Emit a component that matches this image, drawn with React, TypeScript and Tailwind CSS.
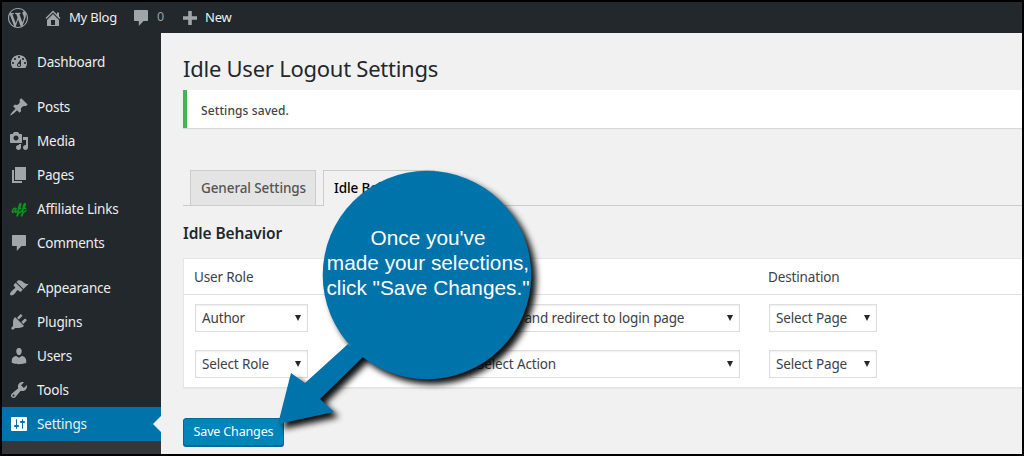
type MenuItem = {
  label: string;
  icon?: string;
  spaced?: boolean;
  active?: boolean;
};

const icons = {
  wordpress:
    "M20 10c0-5.51-4.49-10-10-10C4.48 0 0 4.49 0 10c0 5.52 4.48 10 10 10 5.51 0 10-4.48 10-10zM7.78 15.37L4.37 6.22c.55-.02 1.17-.08 1.17-.08.5-.06.44-1.13-.06-1.11 0 0-1.45.11-2.37.11-.18 0-.37 0-.58-.01C4.12 2.69 6.87 1.11 10 1.11c2.33 0 4.45.87 6.05 2.34-.68-.11-1.65.39-1.65 1.58 0 .74.45 1.36.9 2.1.35.61.55 1.36.55 2.46 0 1.49-1.4 5-1.4 5l-3.03-8.37c.54-.02.82-.17.82-.17.5-.05.44-1.25-.06-1.22 0 0-1.44.12-2.38.12-.87 0-2.33-.12-2.33-.12-.5-.03-.56 1.2-.06 1.22l.92.08 1.26 3.41zM17.41 10c.24-.64.74-1.87.43-4.25.7 1.29 1.05 2.71 1.05 4.25 0 3.29-1.73 6.24-4.4 7.78.97-2.59 1.94-5.2 2.92-7.78zM6.1 18.09C3.12 16.65 1.11 13.53 1.11 10c0-1.3.23-2.48.72-3.59C3.25 10.3 4.67 14.2 6.1 18.09zm4.03-6.63l2.58 6.98c-.86.29-1.76.45-2.71.45-.79 0-1.57-.11-2.29-.33.81-2.38 1.62-4.74 2.42-7.1z",
  home: "M16 8.5l1.53 1.53-1.06 1.06L10 4.6l-6.47 6.49-1.06-1.06L10 2.5l4 4v-2h2v4zm-6-2.46l6 5.99V18H4v-5.97zM12 17v-5H8v5h4z",
  comments: "M4 2h12c.6 0 1 .4 1 1v9c0 .6-.4 1-1 1h-3.500l-4.700 5v-5H4c-.6 0-1-.4-1-1V3c0-.6.4-1 1-1z",
  plus: "M17 8.2v3.600h-5.200V17H8.200v-5.200H3V8.200h5.200V3h3.600v5.200H17z",
  dashboard:
    "M3.76 16h12.48c1.1-1.37 1.76-3.11 1.76-5 0-4.42-3.58-8-8-8s-8 3.58-8 8c0 1.89.66 3.63 1.76 5zM10 4c.55 0 1 .45 1 1s-.45 1-1 1-1-.45-1-1 .45-1 1-1zM6 6c.55 0 1 .45 1 1s-.45 1-1 1-1-.45-1-1 .45-1 1-1zm8 0c.55 0 1 .45 1 1s-.45 1-1 1-1-.45-1-1 .45-1 1-1zm-5.37 5.55L12 7v6c0 1.1-.9 2-2 2s-2-.9-2-2c0-.57.24-1.08.63-1.45zM4 10c.55 0 1 .45 1 1s-.45 1-1 1-1-.45-1-1 .45-1 1-1zm12 0c.55 0 1 .45 1 1s-.45 1-1 1-1-.45-1-1 .45-1 1-1zm-5 3c0-.55-.45-1-1-1s-1 .45-1 1 .45 1 1 1 1-.45 1-1z",
  posts:
    "M10.44 3.02l1.82-1.82 6.36 6.35-1.83 1.82c-1.05-.68-2.48-.57-3.41.36l-.75.75c-.92.93-1.04 2.35-.35 3.41l-1.83 1.82-2.41-2.41-2.8 2.79c-.42.42-3.38 2.71-3.8 2.29s1.86-3.39 2.28-3.81l2.79-2.79L4.1 9.36l1.83-1.82c1.05.69 2.48.57 3.4-.36l.75-.75c.93-.92 1.05-2.35.36-3.41z",
  media:
    "M13 11V4c0-.55-.45-1-1-1h-1.67L9 1H5L3.67 3H2c-.55 0-1 .45-1 1v7c0 .55.45 1 1 1h10c.55 0 1-.45 1-1zM7 4.5c1.38 0 2.5 1.12 2.5 2.5S8.38 9.5 7 9.5 4.5 8.38 4.5 7 5.62 4.5 7 4.5zM14 6h5v10.5c0 1.38-1.12 2.5-2.5 2.5S14 17.88 14 16.5s1.12-2.5 2.5-2.5c.17 0 .34.02.5.05V9h-3V6zm-4 8.05V13h2v3.5c0 1.38-1.12 2.5-2.5 2.5S7 17.88 7 16.5 8.12 14 9.5 14c.17 0 .34.02.5.05z",
  pages: "M6 15V2h11v13H6zm-1 1h8v2H3V5h2v11z",
  appearance:
    "M14.48 11.06L7.41 3.99l1.5-1.5c.5-.56 2.3-.47 3.51.32 1.21.8 1.43 1.28 2.91 2.1 1.18.64 2.45 1.26 4.45.85zm-.71.71L6.7 4.7 4.93 6.47c-.39.39-.39 1.02 0 1.41l1.06 1.06c.39.39.39 1.03 0 1.42-.6.6-1.43 1.11-2.21 1.69-.35.26-.7.53-1.01.84C1.43 14.23.4 16.08 1.4 17.07c.99 1 2.84-.03 4.18-1.36.31-.31.58-.66.85-1.02.57-.78 1.08-1.61 1.69-2.21.39-.39 1.02-.39 1.41 0l1.06 1.06c.39.39 1.02.39 1.41 0z",
  plugins:
    "M13.11 4.36L9.87 7.6 8 5.73l3.24-3.24c.35-.34 1.05-.2 1.56.32.52.51.66 1.21.31 1.55zm-8 1.77l.91-1.12 9.01 9.01-1.19.84c-.71.71-2.63 1.16-3.82 1.16H6.14L4.9 17.26c-.59.59-1.54.59-2.12 0-.59-.58-.59-1.53 0-2.12l1.24-1.24v-3.88c0-1.13.4-3.19 1.09-3.89zm7.26 3.97l3.24-3.24c.34-.35 1.04-.21 1.55.31.52.51.66 1.21.31 1.55l-3.24 3.25z",
  users:
    "M10 9.25c-2.27 0-2.73-3.44-2.73-3.44C7 4.02 7.82 2 9.97 2c2.16 0 2.98 2.02 2.71 3.81 0 0-.41 3.44-2.68 3.44zm0 2.57L12.72 10c2.39 0 4.52 2.33 4.52 4.53v2.49s-3.65 1.13-7.24 1.13c-3.65 0-7.24-1.13-7.24-1.13v-2.49c0-2.25 1.94-4.48 4.47-4.48z",
  tools:
    "M16.68 9.77c-1.34 1.34-3.3 1.67-4.95.99l-5.41 6.52c-.99.99-2.59.99-3.58 0s-.99-2.59 0-3.57l6.52-5.42c-.68-1.65-.35-3.61.99-4.95 1.28-1.28 3.12-1.62 4.72-1.06l-2.89 2.89 2.82 2.82 2.86-2.87c.53 1.58.18 3.39-1.08 4.65zM3.81 16.21c.4.39 1.04.39 1.43 0 .4-.4.4-1.04 0-1.43-.39-.4-1.03-.4-1.43 0-.39.39-.39 1.03 0 1.43z",
  settings:
    "M18 16V4c0-.55-.45-1-1-1H3c-.55 0-1 .45-1 1v12c0 .55.45 1 1 1h14c.55 0 1-.45 1-1zM8 11h1c.55 0 1 .45 1 1s-.45 1-1 1H8v1.5c0 .28-.22.5-.5.5s-.5-.22-.5-.5V13H6c-.55 0-1-.45-1-1s.45-1 1-1h1V5.5c0-.28.22-.5.5-.5s.5.22.5.5V11zm5-2h-1c-.55 0-1-.45-1-1s.45-1 1-1h1V5.5c0-.28.22-.5.5-.5s.5.22.5.5V7h1c.55 0 1 .45 1 1s-.45 1-1 1h-1v5.5c0 .28-.22.5-.5.5s-.5-.22-.5-.5V9z",
};

const menu: MenuItem[] = [
  { label: "Dashboard", icon: icons.dashboard },
  { label: "Posts", icon: icons.posts, spaced: true },
  { label: "Media", icon: icons.media },
  { label: "Pages", icon: icons.pages },
  { label: "Affiliate Links" },
  { label: "Comments", icon: icons.comments },
  { label: "Appearance", icon: icons.appearance, spaced: true },
  { label: "Plugins", icon: icons.plugins },
  { label: "Users", icon: icons.users },
  { label: "Tools", icon: icons.tools },
  { label: "Settings", icon: icons.settings, active: true },
];

function Icon({ d, className = "text-[#a0a5aa]" }: { d: string; className?: string }) {
  return (
    <svg viewBox="0 0 20 20" className={`h-5 w-5 shrink-0 fill-current ${className}`}>
      <path d={d} />
    </svg>
  );
}

// Handwritten loops of the affiliate plugin's mark
function AffIcon() {
  return (
    <svg
      viewBox="0 0 20 20"
      className="h-5 w-5 shrink-0 fill-none stroke-[#12901a]"
      strokeWidth="1.5"
      strokeLinecap="round"
      strokeLinejoin="round"
    >
      <path d="M7 9.500C5 8.800 3.200 10.800 3.300 12.800C3.700 14.800 6 12.500 7 9.800C6.300 12.500 6.500 14.500 8 13C10 10.800 12.300 6.500 11.800 4.800C10.800 3.500 9.500 7.500 9.300 11.500C9.200 14.500 8.800 17.300 8 16.800C7.500 15.500 10 13.800 12 12.500C14.300 10.500 16.800 6.500 16.300 4.800C15.300 3.500 14 7.500 13.800 11.500C13.700 14.500 13.200 17.300 12.400 16.800C12 15.500 14.500 13.500 17 11.500M9.300 9.500h2.500M13.800 9.500h3" />
    </svg>
  );
}

function AdminBar() {
  return (
    <header className="flex h-[31px] shrink-0 items-center bg-[#23282d] pl-1.5 text-[13px] text-[#eee]">
      <Icon d={icons.wordpress} />
      <Icon d={icons.home} className="ml-[15px] text-[#a0a5aa]" />
      <span className="ml-1.5 w-[62px] tracking-[-0.2px] whitespace-nowrap">My Blog</span>
      <Icon d={icons.comments} className="text-[#a0a5aa]" />
      <span className="ml-[6px] w-[23px] text-[12.5px] text-[#9ca2a7]">0</span>
      <Icon d={icons.plus} />
      <span className="ml-[5px] tracking-[-0.2px]">New</span>
    </header>
  );
}

function Sidebar() {
  return (
    <aside className="flex w-[159px] shrink-0 flex-col bg-[#23282d] pt-3">
      {menu.map((item) => (
        <a
          key={item.label}
          className={`flex h-[34px] shrink-0 items-center pl-[7px] text-[13.5px] tracking-[-0.2px] text-[#eee] ${
            item.spaced ? "mt-[11px]" : ""
          } ${item.active ? "relative bg-[#0073aa]" : ""}`}
        >
          {item.icon ? (
            <Icon d={item.icon} className={item.active ? "text-white" : "text-[#a0a5aa]"} />
          ) : (
            <AffIcon />
          )}
          <span className="ml-2 pt-px whitespace-nowrap">{item.label}</span>
          {item.active && (
            <svg viewBox="0 0 8 16" className="absolute top-[9px] right-0 h-4 w-2 fill-[#f1f1f1]">
              <path d="M8 0v16L0 8z" />
            </svg>
          )}
        </a>
      ))}
      <div className="flex-1 bg-[#32373c]" />
    </aside>
  );
}

function Select({ value, className }: { value: string; className: string }) {
  return (
    <div
      className={`flex h-7 items-center justify-between border border-[#ddd] bg-white pr-1.5 pl-1.5 shadow-[inset_0_1px_2px_rgba(0,0,0,0.07)] ${className}`}
    >
      <span className="pt-px whitespace-nowrap">{value}</span>
      <svg viewBox="0 0 6 6" className="h-1.5 w-1.5 fill-[#23282d]">
        <path d="M0 0h6L3 6z" />
      </svg>
    </div>
  );
}

function BehaviorTable() {
  return (
    <section className="mt-[13px] h-[130px] border border-r-0 border-[#e5e5e5] bg-white text-[13.5px] tracking-[-0.15px] text-[#3c4146] shadow-[0_1px_1px_rgba(0,0,0,0.04)]">
      <div className="flex h-9 items-center border-b border-[#e1e1e1] pt-0.5 pl-2.5">
        <span className="w-[574px]">User Role</span>
        <span>Destination</span>
      </div>
      <div className="flex pt-[9px] pl-[11px]">
        <Select value="Author" className="w-[113px]" />
        <Select value="Logout and redirect to login page" className="ml-[162px] w-[270px]" />
        <Select value="Select Page" className="ml-[29px] w-[108px]" />
      </div>
      <div className="flex pt-[18px] pl-[11px]">
        <Select value="Select Role" className="w-[113px]" />
        <Select value="Select Action" className="ml-[162px] w-[270px]" />
        <Select value="Select Page" className="ml-[29px] w-[108px]" />
      </div>
    </section>
  );
}

function Callout() {
  return (
    <div className="absolute -top-0.5 -left-0.5 h-[456px] w-[1024px] text-white">
      <svg
        viewBox="0 0 1024 456"
        className="h-[456px] w-[1024px] fill-[#0073aa] drop-shadow-[5px_5px_3px_rgba(0,0,0,0.95)]"
      >
        <path d="M348 344L305 383L291 373L278 424L334 412L320 399L364 356Z" />
        <circle cx="427" cy="275" r="104.3" />
      </svg>
      <p className="absolute top-[225px] left-[323px] w-[210px] text-center font-['Liberation_Sans',sans-serif] text-[20.8px] leading-[25px] whitespace-nowrap">
        <span className="block">Once you've</span>
        <span className="block">made your selections,</span>
        <span className="block">click "Save Changes."</span>
      </p>
    </div>
  );
}

export default function App() {
  return (
    <div className="relative flex h-[456px] w-[1024px] flex-col overflow-hidden border-2 border-black bg-[#f1f1f1] font-['Noto_Sans',sans-serif]">
      <AdminBar />
      <div className="flex min-h-0 flex-1">
        <Sidebar />
        <main className="min-w-0 flex-1 pl-[22px]">
          <h1 className="pt-[19px] text-[22px] leading-8 tracking-[-0.25px] text-[#23282d]">
            Idle User Logout Settings
          </h1>
          <div className="mt-[6px] flex h-[38px] items-center border-l-4 border-[#46b450] bg-white pt-[3px] pl-3.5 text-[12px] font-medium tracking-[0.1px] text-[#444] shadow-[0_1px_1px_rgba(0,0,0,0.1)]">
            Settings saved.
          </div>
          <nav className="mt-[42px] flex h-9 border-b border-[#ccc] pl-[7px] text-[13.5px] font-medium tracking-[-0.1px]">
            <a className="flex h-[35px] w-[126px] items-center border border-b-0 border-[#ccc] bg-[#e4e4e4] pt-px pl-2.5 whitespace-nowrap text-[#555]">
              General Settings
            </a>
            <a className="ml-[7px] flex h-9 w-[112px] items-center border border-b-0 border-[#ccc] bg-[#f1f1f1] pl-2.5 whitespace-nowrap text-black">
              Idle Behavior
            </a>
          </nav>
          <h2 className="mt-[15px] text-[15.5px] leading-6 font-semibold tracking-[-0.1px] text-[#23282d]">
            Idle Behavior
          </h2>
          <BehaviorTable />
          <button className="mt-[30px] flex h-[28px] w-[101px] items-center justify-center rounded-[3px] border border-[#006799] bg-[#0085ba] pt-px text-[12.5px] tracking-[-0.15px] whitespace-nowrap text-white shadow-[0_1px_0_#006799]">
            Save Changes
          </button>
        </main>
      </div>
      <Callout />
    </div>
  );
}
